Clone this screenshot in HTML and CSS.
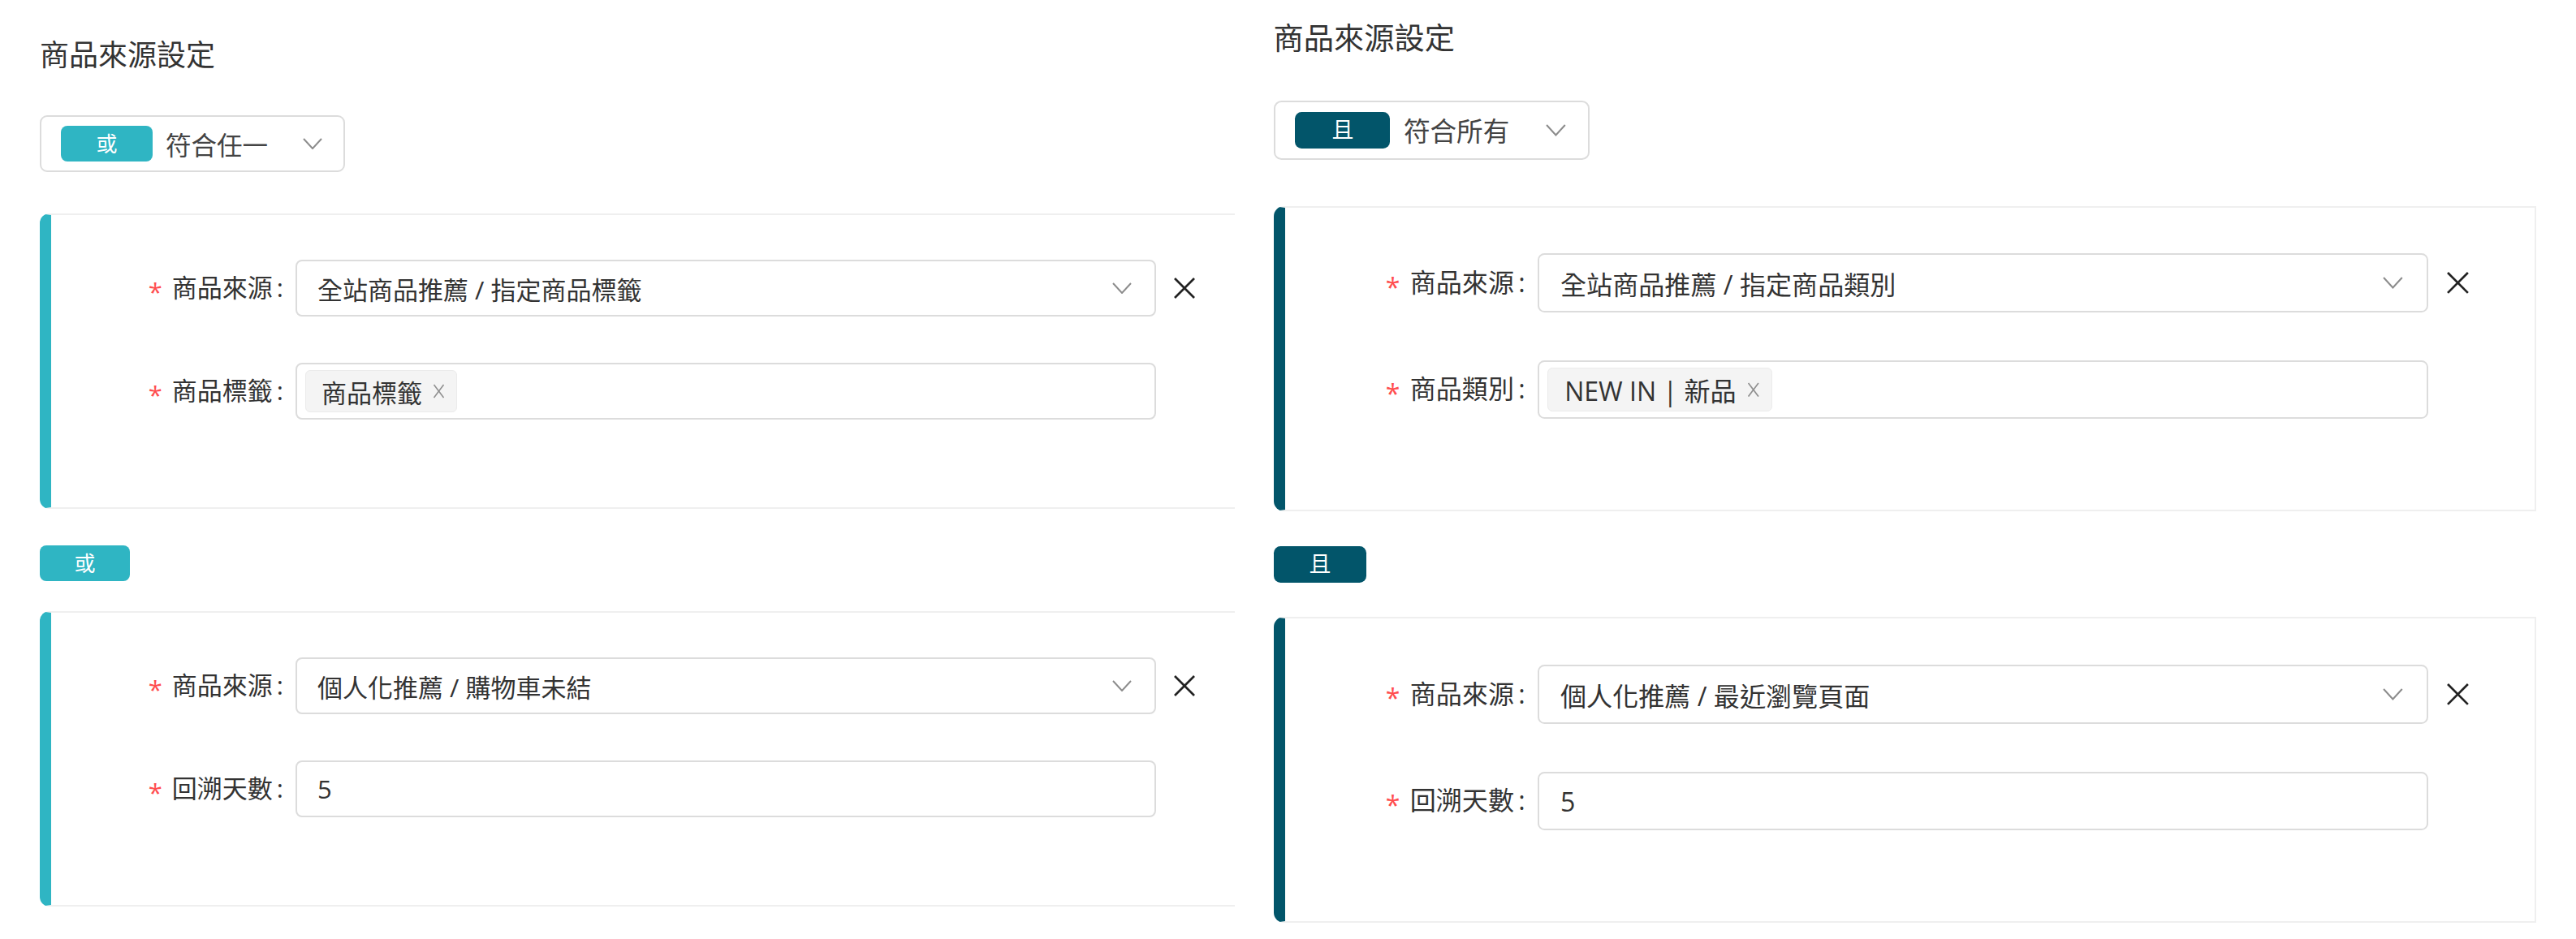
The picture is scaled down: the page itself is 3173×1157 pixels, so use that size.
FILE: index.html
```html
<!DOCTYPE html>
<html lang="zh-Hant">
<head>
<meta charset="utf-8">
<title>商品來源設定</title>
<link rel="stylesheet" href="styles.css">
</head>
<body>
<div class="page">
  <section class="panel panel--or">
    <h2 class="title">商品來源設定</h2>
    <div class="logic-select">
      <span class="badge">或</span>
      <span class="logic-text">符合任一</span>
      <svg class="chev" viewBox="0 0 24 14"><polyline points="1,1 12,13 23,1"/></svg>
    </div>

    <div class="card">
      <div class="row">
        <label class="label"><span class="req">*</span>商品來源<span class="colon">:</span></label>
        <div class="field"><span class="value">全站商品推薦 / 指定商品標籤</span><svg class="chev" viewBox="0 0 24 14"><polyline points="1,1 12,13 23,1"/></svg></div>
        <svg class="close" viewBox="0 0 26 26"><line x1="1" y1="1" x2="25" y2="25"/><line x1="25" y1="1" x2="1" y2="25"/></svg>
      </div>
      <div class="row">
        <label class="label"><span class="req">*</span>商品標籤<span class="colon">:</span></label>
        <div class="field field--tags"><span class="tag">商品標籤<svg class="tag-x" viewBox="0 0 14 18"><line x1="1" y1="1" x2="13" y2="17"/><line x1="13" y1="1" x2="1" y2="17"/></svg></span></div>
      </div>
    </div>

    <div class="sep"><span class="badge badge--sep">或</span></div>

    <div class="card card--next">
      <div class="row">
        <label class="label"><span class="req">*</span>商品來源<span class="colon">:</span></label>
        <div class="field"><span class="value">個人化推薦 / 購物車未結</span><svg class="chev" viewBox="0 0 24 14"><polyline points="1,1 12,13 23,1"/></svg></div>
        <svg class="close" viewBox="0 0 26 26"><line x1="1" y1="1" x2="25" y2="25"/><line x1="25" y1="1" x2="1" y2="25"/></svg>
      </div>
      <div class="row">
        <label class="label"><span class="req">*</span>回溯天數<span class="colon">:</span></label>
        <div class="field"><span class="value">5</span></div>
      </div>
    </div>
  </section>

  <section class="panel panel--and">
    <h2 class="title">商品來源設定</h2>
    <div class="logic-select">
      <span class="badge">且</span>
      <span class="logic-text">符合所有</span>
      <svg class="chev" viewBox="0 0 24 14"><polyline points="1,1 12,13 23,1"/></svg>
    </div>

    <div class="card">
      <div class="row">
        <label class="label"><span class="req">*</span>商品來源<span class="colon">:</span></label>
        <div class="field"><span class="value">全站商品推薦 / 指定商品類別</span><svg class="chev" viewBox="0 0 24 14"><polyline points="1,1 12,13 23,1"/></svg></div>
        <svg class="close" viewBox="0 0 26 26"><line x1="1" y1="1" x2="25" y2="25"/><line x1="25" y1="1" x2="1" y2="25"/></svg>
      </div>
      <div class="row">
        <label class="label"><span class="req">*</span>商品類別<span class="colon">:</span></label>
        <div class="field field--tags"><span class="tag">NEW IN | 新品<svg class="tag-x" viewBox="0 0 14 18"><line x1="1" y1="1" x2="13" y2="17"/><line x1="13" y1="1" x2="1" y2="17"/></svg></span></div>
      </div>
    </div>

    <div class="sep"><span class="badge badge--sep">且</span></div>

    <div class="card card--next">
      <div class="row">
        <label class="label"><span class="req">*</span>商品來源<span class="colon">:</span></label>
        <div class="field"><span class="value">個人化推薦 / 最近瀏覽頁面</span><svg class="chev" viewBox="0 0 24 14"><polyline points="1,1 12,13 23,1"/></svg></div>
        <svg class="close" viewBox="0 0 26 26"><line x1="1" y1="1" x2="25" y2="25"/><line x1="25" y1="1" x2="1" y2="25"/></svg>
      </div>
      <div class="row">
        <label class="label"><span class="req">*</span>回溯天數<span class="colon">:</span></label>
        <div class="field"><span class="value">5</span></div>
      </div>
    </div>
  </section>
</div>
</body>
</html>
```

FILE: styles.css
```css
html, body {
  margin: 0;
  padding: 0;
  background: #ffffff;
}

body {
  font-family: "Open Sans", "Noto Sans CJK TC", "Noto Sans", sans-serif;
  font-weight: 400;
  color: #333333;
}

.page {
  display: flex;
  width: 3173px;
  height: 1157px;
  overflow: hidden;
}

.panel {
  box-sizing: border-box;
}

.panel--or {
  --accent: #2fb5c3;
  flex: none;
  width: 1521px;
  overflow: hidden;
  padding: 47px 0 0 49px;
}

.panel--and {
  --accent: #02556a;
  flex: 1;
  zoom: 1.035;
  padding: 25px 46px 0 46px;
}

.title {
  margin: 0;
  font-size: 36px;
  line-height: 41px;
  font-weight: 400;
  color: #333333;
}

.logic-select {
  margin-top: 54px;
  width: 376px;
  height: 70px;
  box-sizing: border-box;
  border: 2px solid #dcdcdc;
  border-radius: 9px;
  display: flex;
  align-items: center;
  padding: 0 26px 0 24px;
}

.badge {
  display: inline-flex;
  align-items: center;
  justify-content: center;
  width: 113px;
  height: 44px;
  border-radius: 8px;
  background: var(--accent);
  color: #ffffff;
  font-size: 26px;
  line-height: 1;
}

.logic-text {
  flex: 1;
  margin-left: 16px;
  font-size: 31.5px;
  color: #444444;
}

.chev {
  flex: none;
  width: 24px;
  height: 14px;
  fill: none;
  stroke: #8c8c8c;
  stroke-width: 2;
}

.card {
  margin-top: 51px;
  width: 1503px;
  box-sizing: border-box;
  border: 2px solid #efefef;
  border-left: 14px solid var(--accent);
  border-radius: 12px 0 0 12px;
  padding: 55px 0 108px;
  display: flex;
  flex-direction: column;
  gap: 57px;
}

.sep {
  margin-top: 45px;
  display: flex;
}

.badge--sep {
  width: 111px;
}

.card--next {
  margin-top: 37px;
}

.panel--and .card {
  margin-top: 55px;
}

.panel--and .sep {
  margin-top: 41px;
}

.panel--and .card--next {
  margin-top: 41px;
}

.row {
  display: flex;
  align-items: center;
}

.label {
  flex: none;
  width: 301px;
  box-sizing: border-box;
  padding-right: 15px;
  text-align: right;
  font-size: 31px;
  color: #333333;
  white-space: nowrap;
}

.req {
  color: #ff4d4f;
  margin-right: 12px;
  vertical-align: -0.18em;
}

.colon {
  margin-left: 5px;
}

.field {
  flex: none;
  width: 1060px;
  height: 70px;
  box-sizing: border-box;
  border: 2px solid #dcdcdc;
  border-radius: 8px;
  display: flex;
  align-items: center;
  padding: 0 28px 0 25px;
  font-size: 31px;
  color: #333333;
}

.value {
  flex: 1;
}

.field--tags {
  padding-left: 10px;
}

.tag {
  display: inline-flex;
  align-items: center;
  gap: 13px;
  height: 52px;
  box-sizing: border-box;
  padding: 0 14px 0 19px;
  background: #f4f4f4;
  border: 1px solid #ebebeb;
  border-radius: 6px;
  font-size: 31px;
  color: #333333;
}

.tag-x {
  width: 15px;
  height: 18px;
  fill: none;
  stroke: #8f8f8f;
  stroke-width: 1.6;
}

.close {
  flex: none;
  margin-left: 22px;
  width: 26px;
  height: 26px;
  fill: none;
  stroke: #222222;
  stroke-width: 2.6;
}
```
